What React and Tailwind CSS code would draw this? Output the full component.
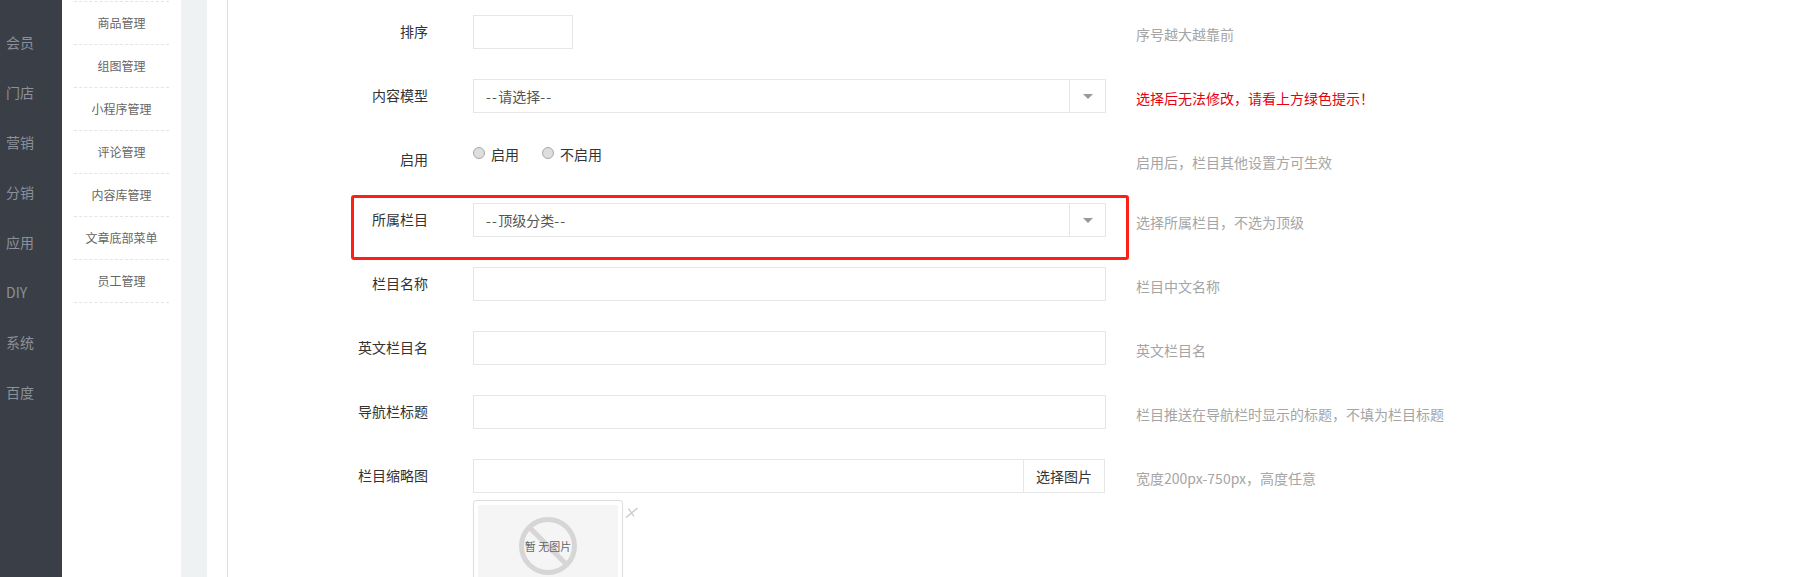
const navItems = ["会员", "门店", "营销", "分销", "应用", "DIY", "系统", "百度"];
const subItems = ["商品管理", "组图管理", "小程序管理", "评论管理", "内容库管理", "文章底部菜单", "员工管理"];

const font = "font-['Microsoft_YaHei','Noto_Sans_CJK_SC','Noto_Sans',sans-serif]";

function Caret() {
  return (
    <span className="flex w-[36px] shrink-0 items-center justify-center self-stretch border-l border-[#e5e6e7]">
      <span className="h-0 w-0 border-x-[5px] border-t-[5px] border-x-transparent border-t-[#999]" />
    </span>
  );
}

function Row({ label, hint, hintRed, h = "h-[64px]", children }) {
  return (
    <div className={`flex ${h}`}>
      <div className="w-[201px] shrink-0 pr-[1px] text-right text-[14px] leading-[32px] text-[#333]">{label}</div>
      <div className="ml-[44px] w-[633px] shrink-0">{children}</div>
      <div className={`ml-[30px] pt-[2px] text-[14px] leading-[34px] ${hintRed ? "text-[#e60012]" : "text-[#a5a5a5]"}`}>
        {hint}
      </div>
    </div>
  );
}

function TextBox() {
  return <div className="h-[34px] w-full border border-[#e5e6e7] bg-white" />;
}

function SelectBox({ text }) {
  return (
    <div className="flex h-[34px] w-full items-center border border-[#e5e6e7] bg-white text-[14px] text-[#555]">
      <span className="flex-1 pl-[12px]">
        <span className="tracking-[1.25px]">--</span>
        {text}
        <span className="tracking-[1.25px]">--</span>
      </span>
      <Caret />
    </div>
  );
}

function Radio({ label }) {
  return (
    <span className="mr-[23px] inline-flex items-center gap-[6px] text-[14px] text-[#333]">
      <span className="mb-[2px] h-[12px] w-[12px] rounded-full border border-[#a8a8a8] bg-[#dedede]" />
      {label}
    </span>
  );
}

export default function App() {
  return (
    <div className={`flex h-[577px] w-[1815px] overflow-hidden bg-white ${font}`}>
      {/* main nav */}
      <div className="w-[62px] shrink-0 bg-[#3a3f47] pt-[17px] pl-[6px] text-[14px] text-[#8b9199]">
        {navItems.map((n) => (
          <div key={n} className="h-[50px] leading-[50px]">{n}</div>
        ))}
      </div>

      {/* sub nav */}
      <div className="w-[119px] shrink-0 px-[12px] pt-[1px]">
        <div className="border-t border-dashed border-[#e4e4e4]" />
        {subItems.map((s) => (
          <div key={s} className="h-[43px] border-b border-dashed border-[#e4e4e4] text-center text-[12px] leading-[42px] text-[#666]">
            {s}
          </div>
        ))}
      </div>

      <div className="w-[26px] shrink-0 bg-[#eef2f3]" />

      {/* form */}
      <div className="relative ml-[20px] flex-1 border-l border-[#dddddd] pt-[15px]">
        <Row label="排序" hint="序号越大越靠前">
          <div className="h-[34px] w-[100px] border border-[#e5e6e7] bg-white" />
        </Row>
        <Row label="内容模型" hint="选择后无法修改，请看上方绿色提示！" hintRed>
          <SelectBox text="请选择" />
        </Row>
        <Row label="启用" hint="启用后，栏目其他设置方可生效" h="h-[60px]">
          <div className="flex h-[22px] items-center">
            <Radio label="启用" />
            <Radio label="不启用" />
          </div>
        </Row>
        <Row label="所属栏目" hint="选择所属栏目，不选为顶级">
          <SelectBox text="顶级分类" />
        </Row>
        <Row label="栏目名称" hint="栏目中文名称">
          <TextBox />
        </Row>
        <Row label="英文栏目名" hint="英文栏目名">
          <TextBox />
        </Row>
        <Row label="导航栏标题" hint="栏目推送在导航栏时显示的标题，不填为栏目标题">
          <TextBox />
        </Row>
        <Row label="栏目缩略图" hint="宽度200px-750px，高度任意" h="h-[200px]">
          <div className="flex h-[34px] w-[632px] border border-[#e5e6e7] bg-white">
            <div className="flex-1" />
            <div className="w-[81px] border-l border-[#e5e6e7] text-center text-[14px] leading-[32px] text-[#333]">选择图片</div>
          </div>
          <div className="mt-[7px] flex items-start">
            <div className="h-[150px] w-[150px] rounded-[3px] border border-[#dddddd] p-[4px]">
              <div className="flex h-full w-full justify-center bg-[#f5f5f5] pt-[12px]">
                <div className="relative flex h-[58px] w-[58px] items-center justify-center">
                  <svg viewBox="0 0 58 58" className="absolute inset-0 h-full w-full">
                    <circle cx="29" cy="29" r="26.5" fill="none" stroke="#d6d6d6" strokeWidth="5" />
                    <path d="M10 10 L48 48" stroke="#d6d6d6" strokeWidth="5" />
                  </svg>
                  <span className="relative whitespace-nowrap text-[11px] text-[#666]">暂 无图片</span>
                </div>
              </div>
            </div>
            <svg viewBox="0 0 13 11" className="ml-[2px] mt-[7px] h-[11px] w-[13px]">
              <path d="M1 10.5 L12.5 1 M3.5 1.5 L9 9.5" fill="none" stroke="#c8c8c8" strokeWidth="1.3" />
            </svg>
          </div>
        </Row>

        {/* annotation box */}
        <div className="absolute left-[123px] top-[195px] h-[65px] w-[778px] rounded-[3px] border-[3px] border-[#ff2015]" />
      </div>
    </div>
  );
}
